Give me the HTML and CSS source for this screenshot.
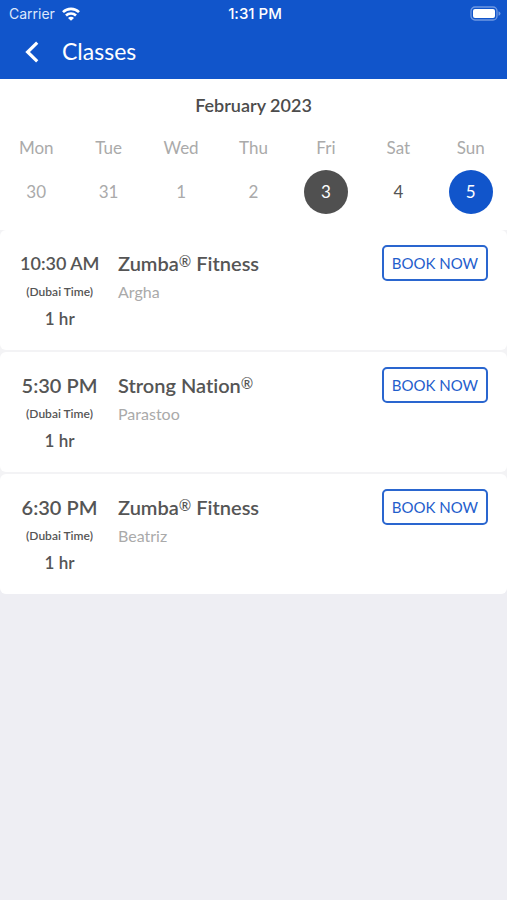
FILE: index.html
```html
<!DOCTYPE html>
<html lang="en">
<head>
<meta charset="utf-8">
<meta name="viewport" content="width=device-width, initial-scale=1">
<title>Classes</title>
<link rel="stylesheet" href="styles.css">
</head>
<body>
<header class="header">
  <div class="status">
    <div class="status-left">
      <span>Carrier</span>
      <svg class="wifi" width="18" height="14" viewBox="0 0 18 14" fill="none" stroke="currentColor" stroke-width="2.6" aria-hidden="true">
        <path d="M1 5.2a11.3 11.3 0 0 1 16 0"/>
        <path d="M4 8.5a7.1 7.1 0 0 1 10 0"/>
        <path d="M9 13.8 6 10.9a4.2 4.2 0 0 1 6 0z" fill="currentColor" stroke="none"/>
      </svg>
    </div>
    <span class="clock">1:31 PM</span>
    <svg class="battery" width="31" height="15" viewBox="0 0 31 15" aria-hidden="true">
      <rect x="1" y="1" width="26" height="13" rx="4" fill="none" stroke="#6f98e2" stroke-width="1.3"/>
      <rect x="3" y="3" width="22" height="9" rx="2" fill="#fff"/>
      <path d="M28.5 5.2v4.6q2-.7 2-2.3t-2-2.3z" fill="#6f98e2"/>
    </svg>
  </div>
  <div class="bar">
    <button class="back" type="button" aria-label="Back">
      <svg width="16" height="22" viewBox="0 0 16 22" fill="none" stroke="currentColor" stroke-width="3.2" aria-hidden="true"><path d="M13.2 1.6 3.6 11l9.6 9.4"/></svg>
    </button>
    <h1 class="title">Classes</h1>
  </div>
</header>
<main>
  <section class="calendar">
    <h2 class="month">February 2023</h2>
    <div class="week">
      <span>Mon</span><span>Tue</span><span>Wed</span><span>Thu</span><span>Fri</span><span>Sat</span><span>Sun</span>
    </div>
    <div class="days">
      <button class="day" type="button">30</button>
      <button class="day" type="button">31</button>
      <button class="day" type="button">1</button>
      <button class="day" type="button">2</button>
      <button class="day today" type="button">3</button>
      <button class="day open" type="button">4</button>
      <button class="day selected" type="button">5</button>
    </div>
  </section>
  <section class="list">
    <article class="card">
      <div class="when">
        <span class="time long">10:30 AM</span>
        <span class="zone">(Dubai Time)</span>
        <span class="length">1 hr</span>
      </div>
      <div class="what">
        <h3 class="name">Zumba<span class="reg">®</span> Fitness</h3>
        <p class="coach">Argha</p>
      </div>
      <button class="book" type="button">BOOK NOW</button>
    </article>
    <article class="card">
      <div class="when">
        <span class="time">5:30 PM</span>
        <span class="zone">(Dubai Time)</span>
        <span class="length">1 hr</span>
      </div>
      <div class="what">
        <h3 class="name">Strong Nation<span class="reg">®</span></h3>
        <p class="coach">Parastoo</p>
      </div>
      <button class="book" type="button">BOOK NOW</button>
    </article>
    <article class="card">
      <div class="when">
        <span class="time">6:30 PM</span>
        <span class="zone">(Dubai Time)</span>
        <span class="length">1 hr</span>
      </div>
      <div class="what">
        <h3 class="name">Zumba<span class="reg">®</span> Fitness</h3>
        <p class="coach">Beatriz</p>
      </div>
      <button class="book" type="button">BOOK NOW</button>
    </article>
  </section>
</main>
</body>
</html>
```

FILE: styles.css
```css
* { box-sizing: border-box; }

body {
  margin: 0;
  background: #eeeef3;
  color: #555;
  font-family: "Avenir Next", Lato, "Liberation Sans", sans-serif;
  font-variant-ligatures: none;
}

h1, h2, h3, p { margin: 0; }

button {
  padding: 0;
  border: 0;
  background: none;
  color: inherit;
  font: inherit;
}

.header {
  padding-bottom: 6px;
  background: #1155cb;
  color: #fff;
}

.status {
  display: grid;
  grid-template-columns: 1fr auto 1fr;
  align-items: center;
  height: 27px;
  padding: 0 6px 0 9px;
  font-family: Inter, "Liberation Sans", sans-serif;
  font-size: 14px;
}

.status-left {
  display: flex;
  align-items: center;
  gap: 7px;
  color: #dde8fb;
}

.wifi { color: #fff; }
.clock { font-size: 15px; font-weight: 500; }
.battery { justify-self: end; }

.bar {
  display: flex;
  align-items: center;
  gap: 22px;
  height: 46px;
  padding: 4px 24px 0;
}

.back svg { display: block; }

.title {
  padding-bottom: 2px;
  font-size: 23px;
  line-height: 28px;
  font-weight: 400;
}

.calendar {
  padding: 14px 0 16px;
  background: #fff;
  color: #aaa;
}

.month {
  color: #4c4c4c;
  font-size: 18px;
  line-height: 24px;
  font-weight: 600;
  text-align: center;
}

.week, .days {
  display: grid;
  grid-template-columns: repeat(7, 1fr);
  justify-items: center;
}

.week {
  padding: 19px 0 10px;
  font-size: 17px;
  line-height: 24px;
}

.day {
  width: 44px;
  height: 44px;
  padding-bottom: 2px;
  border-radius: 50%;
  font-size: 17px;
}

.today { background: #505050; color: #fff; }
.open { color: #555; }
.selected { background: #1155cb; color: #fff; }

.list {
  display: grid;
  gap: 2px;
  border-radius: 0 0 6px 6px;
  background: #f3f3f5;
}

.card {
  display: grid;
  grid-template-columns: 79px 1fr auto;
  gap: 19px;
  align-items: start;
  min-height: 120px;
  padding: 15px 19px 16px 20px;
  border-radius: 6px;
  background: #fff;
}

.when {
  display: grid;
  justify-items: center;
  padding-top: 4px;
  font-weight: 600;
  white-space: nowrap;
}

.time { font-size: 20px; line-height: 28px; }
.long { font-size: 18px; }
.zone { font-size: 12px; line-height: 30px; }
.length { font-size: 17px; line-height: 24px; }

.what { padding-top: 4px; }

.name {
  font-size: 20px;
  line-height: 28px;
  font-weight: 600;
}

.reg {
  font-size: 15px;
  font-weight: 500;
  line-height: 0;
  vertical-align: 4px;
}

.coach {
  color: #aaa;
  font-size: 16px;
  line-height: 30px;
}

.book {
  width: 106px;
  height: 36px;
  border: 2px solid #2a66cf;
  border-radius: 5px;
  color: #1f5ecc;
  font-size: 15px;
  font-weight: 400;
  white-space: nowrap;
}
```
